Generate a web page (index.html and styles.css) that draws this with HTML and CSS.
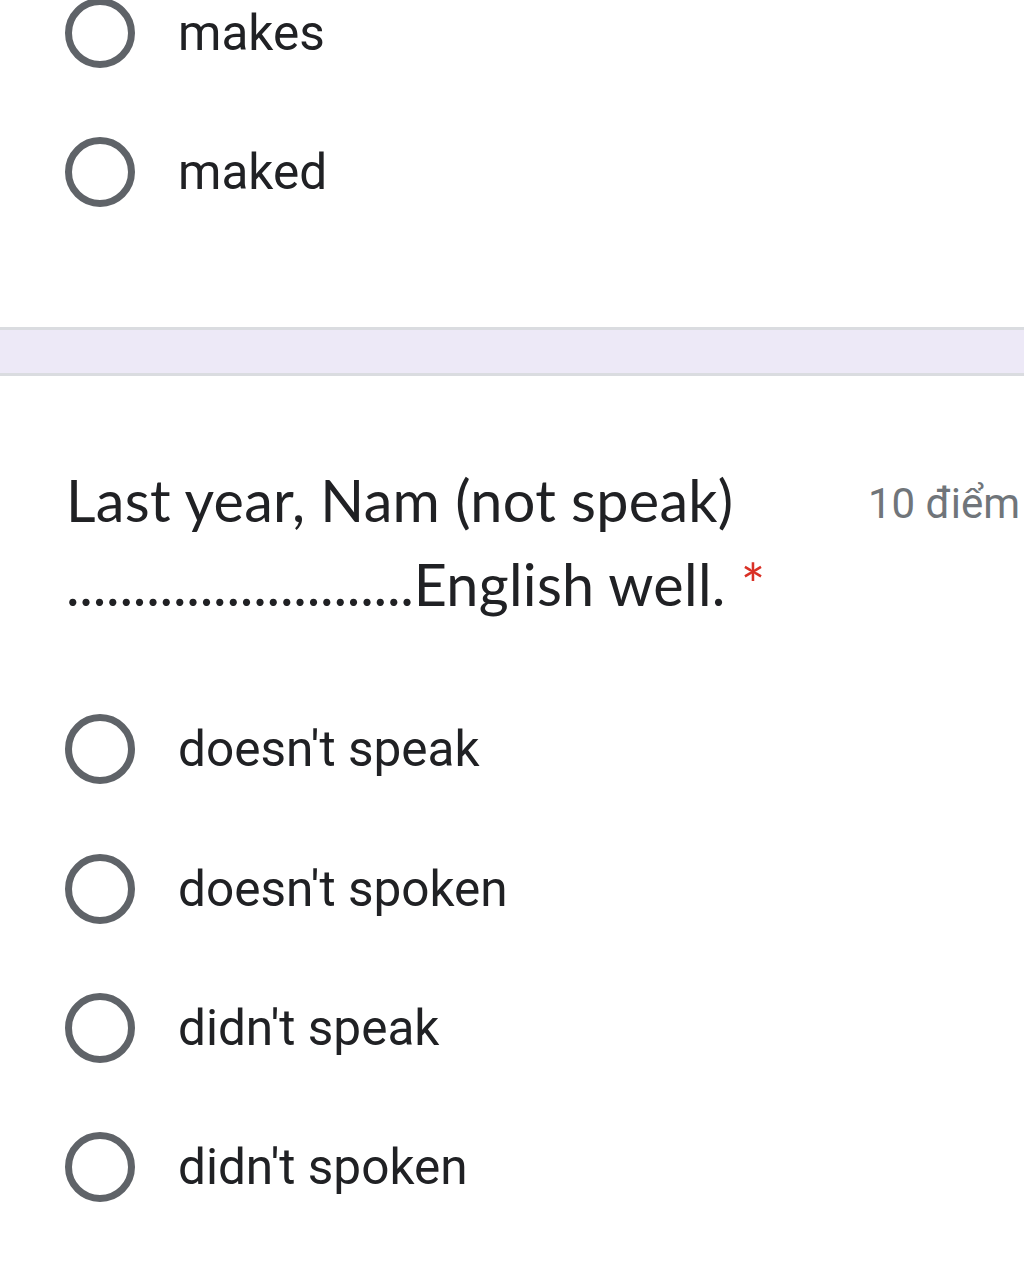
FILE: index.html
```html
<!DOCTYPE html>
<html lang="vi">
<head>
<meta charset="utf-8">
<title>Form</title>
<link rel="stylesheet" href="styles.css">
</head>
<body>
<div class="card card-prev">
  <div class="option"><span class="radio"></span><span class="label">makes</span></div>
  <div class="option"><span class="radio"></span><span class="label">maked</span></div>
</div>
<div class="gap"></div>
<div class="card card-q">
  <div class="q-head">
    <div class="q-title">Last year, Nam (not speak) <span class="dots">..........................</span>English well. <span class="req">*</span></div>
    <div class="q-points">10 điểm</div>
  </div>
  <div class="options">
    <div class="option"><span class="radio"></span><span class="label">doesn't speak</span></div>
    <div class="option"><span class="radio"></span><span class="label">doesn't spoken</span></div>
    <div class="option"><span class="radio"></span><span class="label">didn't speak</span></div>
    <div class="option"><span class="radio"></span><span class="label">didn't spoken</span></div>
  </div>
</div>
</body>
</html>
```
FILE: styles.css
```css
html, body {
  margin: 0;
  padding: 0;
  background: #ffffff;
  overflow: hidden;
}
body {
  width: 1024px;
  height: 1279px;
  font-family: Roboto, "Liberation Sans", sans-serif;
  color: #202124;
}
.card {
  background: #ffffff;
}
.card-prev {
  margin-top: -37px;
  padding-bottom: 85px;
  border-bottom: 3px solid #dadce0;
}
.gap {
  height: 43px;
  background: #ede9f7;
}
.card-q {
  border-top: 3px solid #dadce0;
  padding-top: 82px;
}
.q-head {
  display: flex;
  justify-content: space-between;
  align-items: flex-start;
  padding-left: 66px;
}
.q-title {
  width: 720px;
  font-family: Lato, "Open Sans", sans-serif;
  font-size: 57.5px;
  line-height: 84px;
  color: #202124;
  letter-spacing: 0.3px;
}
.dots {
  letter-spacing: -0.2px;
}
.req {
  color: #d93025;
}
.q-points {
  font-family: Roboto, sans-serif;
  font-size: 42px;
  line-height: 84px;
  color: #70757a;
  white-space: nowrap;
  margin-right: 4px;
  padding-top: 4px;
}
.options {
  padding-top: 54px;
}
.option {
  display: flex;
  align-items: center;
  height: 139.3px;
}
.radio {
  box-sizing: border-box;
  width: 70px;
  height: 70px;
  border: 7px solid #5f6368;
  border-radius: 50%;
  margin-left: 65px;
  flex: none;
}
.label {
  margin-left: 43px;
  font-size: 49.5px;
  color: #202124;
}
```
